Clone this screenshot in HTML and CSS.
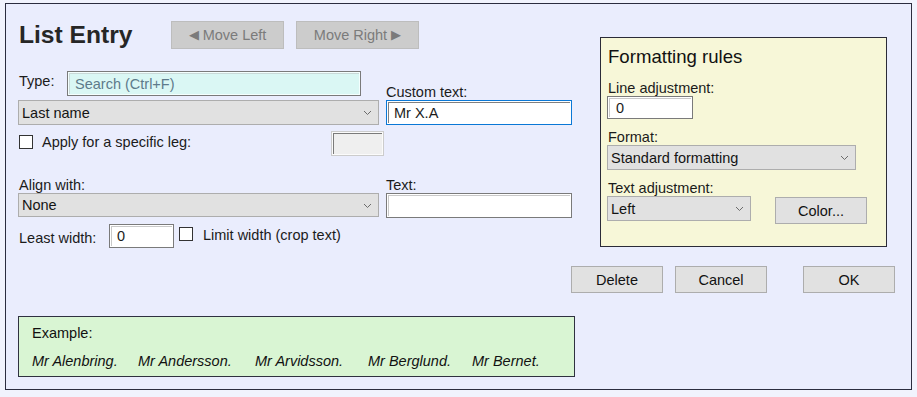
FILE: index.html
```html
<!DOCTYPE html>
<html>
<head>
<meta charset="utf-8">
<link rel="stylesheet" href="styles.css">
</head>
<body>
<div class="panel">
  <div class="top">
    <div class="left">
      <div class="header">
        <h1 class="title">List Entry</h1>
        <button class="move move-left"><span class="tri">◀</span> Move Left</button>
        <button class="move move-right">Move Right <span class="tri">▶</span></button>
      </div>

      <div class="row row-a">
        <div class="cell-l type-cell">
          <span class="lbl type-lbl">Type:</span>
          <div class="field search"><span class="placeholder">Search (Ctrl+F)</span></div>
        </div>
        <div class="cell-r label-end"><span class="lbl">Custom text:</span></div>
      </div>

      <div class="row row-b">
        <div class="cell-l">
          <div class="select wide"><span>Last name</span>
            <svg class="chev" width="9" height="6" viewBox="0 0 9 6"><path d="M1 1l3.5 3.5L8 1" fill="none" stroke="#6b6b6b" stroke-width="1"/></svg>
          </div>
        </div>
        <div class="cell-r">
          <div class="field text focused"><span>Mr X.A</span></div>
        </div>
      </div>

      <div class="row row-c">
        <label class="check-wrap"><span class="box"></span><span class="lbl">Apply for a specific leg:</span></label>
        <div class="field disabled"></div>
      </div>

      <div class="row row-d">
        <div class="cell-l"><span class="lbl">Align with:</span></div>
        <div class="cell-r"><span class="lbl">Text:</span></div>
      </div>

      <div class="row row-e">
        <div class="cell-l">
          <div class="select wide short"><span>None</span>
            <svg class="chev" width="9" height="6" viewBox="0 0 9 6"><path d="M1 1l3.5 3.5L8 1" fill="none" stroke="#6b6b6b" stroke-width="1"/></svg>
          </div>
        </div>
        <div class="cell-r">
          <div class="field text"></div>
        </div>
      </div>

      <div class="row row-f">
        <span class="lbl least-lbl">Least width:</span>
        <div class="field least"><span>0</span></div>
        <label class="check-wrap limit"><span class="box"></span><span class="lbl">Limit width (crop text)</span></label>
      </div>
    </div>

    <div class="fmt">
      <h2 class="fmt-title">Formatting rules</h2>
      <div class="lbl fmt-lbl first">Line adjustment:</div>
      <div class="field line-adj"><span>0</span></div>
      <div class="lbl fmt-lbl">Format:</div>
      <div class="select fmt-select"><span>Standard formatting</span>
        <svg class="chev" width="9" height="6" viewBox="0 0 9 6"><path d="M1 1l3.5 3.5L8 1" fill="none" stroke="#6b6b6b" stroke-width="1"/></svg>
      </div>
      <div class="lbl fmt-lbl">Text adjustment:</div>
      <div class="adj-row">
        <div class="select adj-select"><span>Left</span>
          <svg class="chev" width="9" height="6" viewBox="0 0 9 6"><path d="M1 1l3.5 3.5L8 1" fill="none" stroke="#6b6b6b" stroke-width="1"/></svg>
        </div>
        <button class="btn color-btn">Color...</button>
      </div>
    </div>
  </div>

  <div class="actions">
    <button class="btn">Delete</button>
    <button class="btn cancel">Cancel</button>
    <button class="btn ok">OK</button>
  </div>

  <div class="example">
    <div class="lbl ex-title">Example:</div>
    <div class="names">
      <span class="nm n1">Mr Alenbring.</span>
      <span class="nm n2">Mr Andersson.</span>
      <span class="nm n3">Mr Arvidsson.</span>
      <span class="nm n4">Mr Berglund.</span>
      <span class="nm n5">Mr Bernet.</span>
    </div>
  </div>
</div>
</body>
</html>
```

FILE: styles.css
```css
* { box-sizing: border-box; }
html, body { margin: 0; padding: 0; }
body {
  background: #f1f3fd;
  font-family: "Liberation Sans", Arial, sans-serif;
  font-size: 14.5px;
  color: #1b1b1b;
  width: 917px;
  height: 397px;
  overflow: hidden;
}
.panel {
  margin: 3px 0 0 5px;
  width: 907px;
  height: 387px;
  border: 1px solid #2b2d3f;
  background: #eaedfd;
  padding: 17px 16px 0 12px;
  display: flex;
  flex-direction: column;
}
.top { display: flex; align-items: flex-start; }
.left { width: 555px; }
.header { display: flex; align-items: center; height: 28px; }
.title {
  margin: 0 39px 0 1px;
  font-size: 24.6px;
  font-weight: bold;
  line-height: 28px;
  color: #262626;
  width: 113px;
  white-space: nowrap;
}
button {
  font-family: "Liberation Sans", Arial, sans-serif;
  font-size: 14.5px;
  padding: 0;
  margin: 0;
}
.move {
  height: 28px;
  background: #cccccc;
  border: 1px solid #bdbdbd;
  color: #7b7b7b;
}
.move-left { width: 113px; }
.move-right { width: 123px; margin-left: 12px; }
.tri { font-size: 13px; position: relative; top: -1px; }

.lbl { line-height: 16px; white-space: nowrap; }
.row { display: flex; }
.cell-l { width: 361px; display: flex; }
.cell-r { width: 186px; margin-left: 7px; display: flex; }

.row-a { margin-top: 22px; height: 25px; }
.type-cell { align-items: flex-start; }
.type-lbl { margin: 2px 0 0 1px; width: 48px; }
.label-end { align-items: flex-end; }
.label-end .lbl { margin-bottom: -4px; }

.field {
  height: 25px;
  border: 1px solid #7a7a7a;
  background: #fff;
  box-shadow: inset 0 0 0 1px #fff, inset 1px 1px 0 1px #c9c9c9;
  display: flex;
  align-items: center;
  padding-left: 7px;
  line-height: 16px;
}
.search {
  width: 294px;
  background: #daf7f4;
  box-shadow: inset 0 0 0 1px #f4fffe, inset 1px 1px 0 1px #c9d9d8;
}
.placeholder { color: #5e7b8b; }

.row-b { margin-top: 4px; }
.select {
  height: 25px;
  background: #e1e1e1;
  border: 1px solid #adadad;
  display: flex;
  align-items: center;
  justify-content: space-between;
  padding: 0 6px 0 3px;
  line-height: 16px;
  color: #141414;
}
.select.wide { width: 361px; }
.select.short { height: 24px; }
.chev { display: block; margin-top: 1px; }
.text { width: 186px; }
.focused {
  border-color: #0a78d6;
  box-shadow: inset 0 0 0 1px #fff, inset 1px 1px 0 1px #808080;
}

.row-c { margin-top: 6px; height: 25px; width: 366px; justify-content: space-between; align-items: flex-start; }
.check-wrap { display: flex; align-items: flex-start; }
.box {
  width: 14px;
  height: 14px;
  border: 1px solid #333;
  background: #fff;
  margin: 4px 9px 0 1px;
}
.row-c .lbl { margin-top: 3px; }
.disabled {
  width: 53px;
  background: #efefef;
  border: 1px solid #cccccc;
  box-shadow: inset 0 0 0 1px #fbfbfb, inset 2px 2px 0 0 #7a7a7a;
}

.row-d { margin-top: 21px; height: 16px; }
.row-d .cell-l .lbl { margin-left: 1px; }
.row-e { height: 25px; }

.row-f { margin-top: 6px; height: 24px; align-items: flex-start; }
.least-lbl { width: 91px; margin-top: 6px; padding-left: 1px; }
.least { width: 65px; height: 24px; }
.limit { margin-left: 5px; }
.limit .box { margin: 3px 10px 0 0; }
.limit .lbl { margin-top: 3px; }

.fmt {
  margin: 16px 0 0 27px;
  width: 287px;
  height: 210px;
  background: #f7f7d8;
  border: 1px solid #2b2b38;
  padding: 8px 0 0 6px;
}
.fmt-title {
  margin: 0 0 0 1px;
  font-size: 18.6px;
  font-weight: normal;
  line-height: 22px;
  color: #111;
}
.fmt-lbl { margin: 10px 0 0 1px; }
.fmt-lbl.first { margin-top: 12px; }
.line-adj { width: 86px; height: 23px; padding-left: 8px; }
.fmt-select { width: 249px; }
.adj-row { display: flex; align-items: flex-start; }
.adj-select { width: 144px; }
.btn {
  height: 27px;
  width: 92px;
  background: #e1e1e1;
  border: 1px solid #adadad;
  color: #111;
}
.color-btn { margin: 1px 0 0 24px; }

.actions {
  display: flex;
  justify-content: flex-end;
  margin-top: 18px;
}
.actions .btn { width: 92px; }
.cancel { margin-left: 12px; }
.ok { margin-left: 36px; }

.example {
  margin-top: 23px;
  width: 557px;
  height: 61px;
  background: #d9f5d3;
  border: 1px solid #2f3140;
  padding: 8px 0 0 13px;
}
.ex-title { color: #111; }
.names {
  margin-top: 12px;
  display: flex;
  font-style: italic;
  line-height: 16px;
  color: #111;
}
.nm { white-space: nowrap; }
.n1 { width: 106px; }
.n2 { width: 117px; }
.n3 { width: 113px; }
.n4 { width: 104px; }
```
